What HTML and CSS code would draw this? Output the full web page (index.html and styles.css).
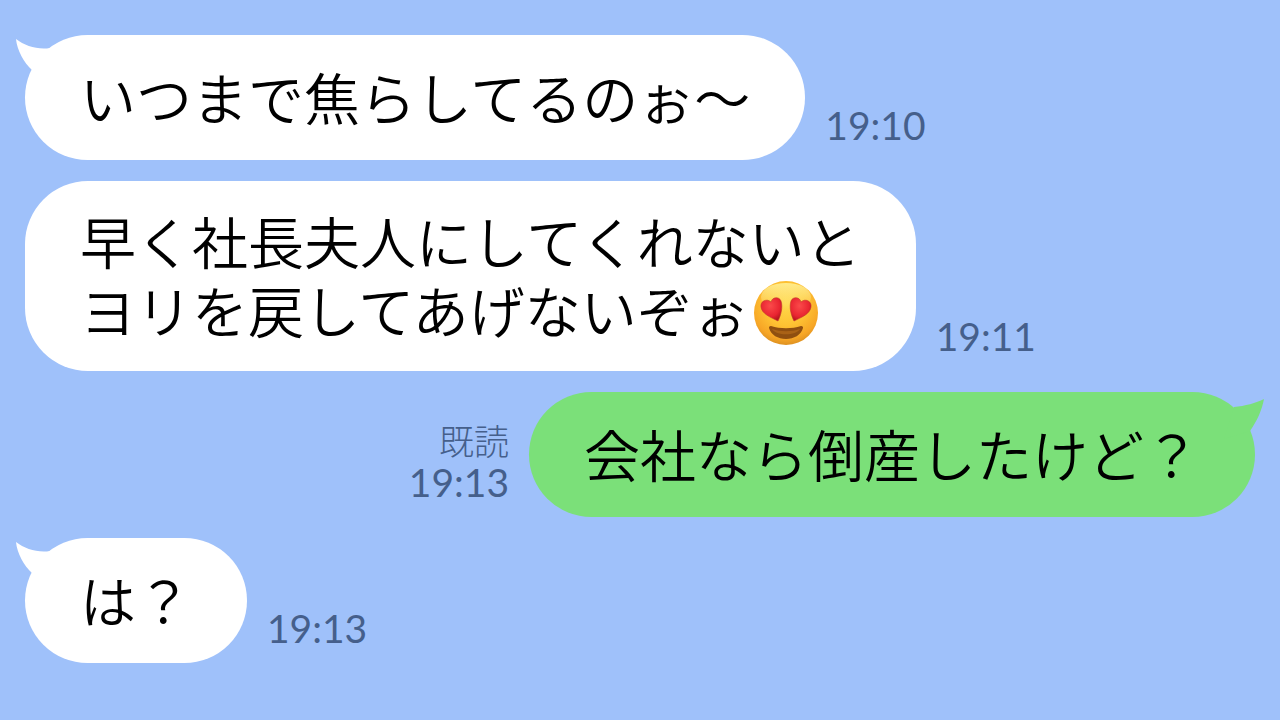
FILE: index.html
```
<!DOCTYPE html>
<html lang="ja">
<head>
    <meta charset="UTF-8">
    <meta name="viewport" content="width=device-width, initial-scale=1.0">
    <title>トーク</title>
    <link rel="stylesheet" href="styles.css">
</head>
<body>
    <main class="chat">
        <div class="message">
            <div class="bubble">
                <svg class="tail" viewBox="0 0 40 40" aria-hidden="true"><path d="M0 0C9 7 22 11 34 9L40 40L16 31C8 24 1 11 0 0Z"/></svg>
                <p>いつまで焦らしてるのぉ〜</p>
            </div>
            <div class="meta"><time>19:10</time></div>
        </div>
        <div class="message">
            <div class="bubble">
                <p>早く社長夫人にしてくれないと<br>ヨリを戻してあげないぞぉ<svg class="emoji" viewBox="0 0 66 66" role="img" aria-label="目がハートの笑顔">
                    <defs>
                        <radialGradient id="face" cx="50%" cy="36%" r="66%">
                            <stop offset="0" stop-color="#ffd84a"/>
                            <stop offset="0.5" stop-color="#fec233"/>
                            <stop offset="0.82" stop-color="#f7a626"/>
                            <stop offset="1" stop-color="#d98d20"/>
                        </radialGradient>
                        <linearGradient id="shine" x1="0" y1="0" x2="0" y2="1">
                            <stop offset="0" stop-color="#fff5a0" stop-opacity="0.8"/>
                            <stop offset="1" stop-color="#fff5a0" stop-opacity="0"/>
                        </linearGradient>
                        <radialGradient id="heart" cx="45%" cy="35%" r="65%">
                            <stop offset="0" stop-color="#fb4a4a"/>
                            <stop offset="0.7" stop-color="#e92531"/>
                            <stop offset="1" stop-color="#b9151f"/>
                        </radialGradient>
                    </defs>
                    <circle cx="33" cy="33" r="32" fill="url(#face)"/>
                    <ellipse cx="33" cy="17" rx="25" ry="14" fill="url(#shine)"/>
                    <path d="M18 46C27 49 39 49 48 46C50 46 50 47 50 48C48 55 41 59 33 59C25 59 18 55 16 48C16 47 16 46 18 46Z" fill="#8f4f10"/>
                    <path d="M19 49C28 52 38 52 47 49C43 56 23 56 19 49Z" fill="#a96216"/>
                    <path d="M25 41C17 37 9 34 8 27C7 21 14 18 18 22C19 17 26 16 28 21C30 27 28 35 25 41Z" fill="url(#heart)" stroke="#c0392b" stroke-width="0.6"/>
                    <path d="M41 41C49 37 57 34 58 27C59 21 52 18 48 22C47 17 40 16 38 21C36 27 38 35 41 41Z" fill="url(#heart)" stroke="#c0392b" stroke-width="0.6"/>
                </svg></p>
            </div>
            <div class="meta"><time>19:11</time></div>
        </div>
        <div class="message sent">
            <div class="bubble">
                <svg class="tail" viewBox="0 0 40 40" aria-hidden="true"><path d="M40 0C32 4 21 7 10 8L0 40L26 32C33 22 38 11 40 0Z"/></svg>
                <p>会社なら倒産したけど？</p>
            </div>
            <div class="meta"><span class="read">既読</span><time>19:13</time></div>
        </div>
        <div class="message">
            <div class="bubble">
                <svg class="tail" viewBox="0 0 40 40" aria-hidden="true"><path d="M0 0C9 7 22 11 34 9L40 40L16 31C8 24 1 11 0 0Z"/></svg>
                <p>は？</p>
            </div>
            <div class="meta"><time>19:13</time></div>
        </div>
    </main>
</body>
</html>
```
FILE: styles.css
```
* {
    box-sizing: border-box;
}
body {
    margin: 0;
    min-height: 100vh;
    background-color: #9fc1fa;
    color: #000;
    font-family: "Noto Sans CJK JP", sans-serif;
}
.chat {
    display: flex;
    flex-direction: column;
    gap: 21px;
    padding: 35px 25px;
}
.message {
    display: flex;
    align-items: flex-end;
    gap: 20px;
}
.message.sent {
    flex-direction: row-reverse;
}
.bubble {
    position: relative;
    display: flex;
    align-items: center;
    min-height: 125px;
    padding: 24px 55px 28px;
    border-radius: 63px;
    background-color: #fff;
}
.sent .bubble {
    background-color: #7be079;
}
.bubble p {
    margin: 0;
    font-size: 56px;
    font-weight: 350;
    line-height: 69px;
}
/* Speech tail on the upper corner of the bubble */
.tail {
    position: absolute;
    top: 4px;
    left: -9px;
    width: 40px;
    height: 40px;
    fill: #fff;
}
.sent .tail {
    top: 7px;
    right: -9px;
    left: auto;
    fill: #7be079;
}
.emoji {
    width: 66px;
    height: 66px;
    margin: -8px 0 -8px 4px;
    vertical-align: -5px;
}
.meta {
    display: flex;
    flex-direction: column;
    align-items: flex-end;
    padding-bottom: 14px;
    color: #455f8b;
    font-size: 39px;
    line-height: 42px;
}
.meta time {
    font-family: Lato, "Liberation Sans", sans-serif;
    font-weight: 400;
}
.read {
    font-size: 35px;
    font-weight: 300;
}
```
